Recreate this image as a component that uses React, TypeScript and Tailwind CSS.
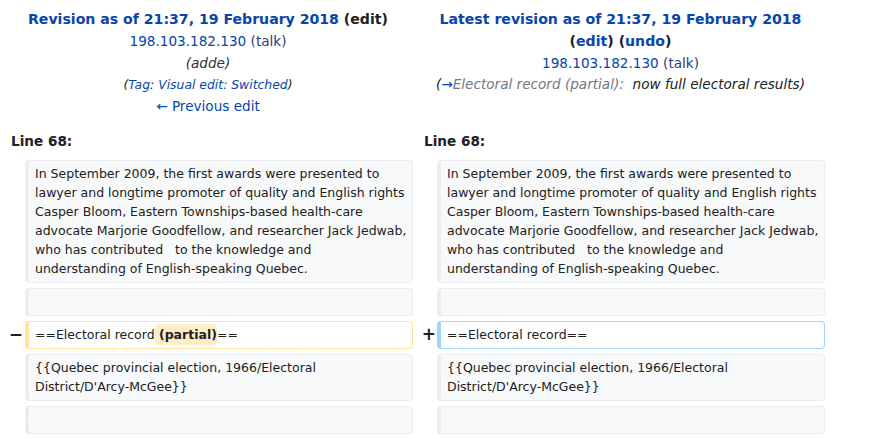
const font = { fontFamily: '"DejaVu Sans", sans-serif' };

function Box({
  kind = "context",
  children,
}: {
  kind?: "context" | "deleted" | "added";
  children?: React.ReactNode;
}) {
  const tone =
    kind === "deleted"
      ? "border-[#ffe49c] bg-white"
      : kind === "added"
        ? "border-[#a3d3ff] bg-white"
        : "border-[#eaecf0] bg-[#f8f9fa]";
  return (
    <div
      className={`min-h-[28px] rounded-[4px] border border-l-4 pl-[6px] pr-[3px] py-[3.5px] text-[12.5px] leading-[19px] whitespace-pre-wrap break-words text-[#202122] ${tone}`}
    >
      {children}
    </div>
  );
}

function Marker({ sign, pad }: { sign?: string; pad: string }) {
  return (
    <div
      className={`flex items-center justify-end text-[17px] font-bold leading-none text-[#202122] ${pad}`}
    >
      {sign}
    </div>
  );
}

// line breaks as the wiki diff wraps them
const para = [
  "In September 2009, the first awards were presented to",
  "lawyer and longtime promoter of quality and English rights",
  "Casper Bloom, Eastern Townships-based health-care",
  "advocate Marjorie Goodfellow, and researcher Jack Jedwab,",
  "who has contributed   to the knowledge and",
  "understanding of English-speaking Quebec.",
].join("\n");
const tmpl = "{{Quebec provincial election, 1966/Electoral\nDistrict/D'Arcy-McGee}}";

export default function App() {
  return (
    <div className="min-h-screen w-[874px] bg-white text-[#202122]" style={font}>
      <div className="grid w-[825px] grid-cols-[416px_409px] pt-[9px] text-center text-[13.6px] leading-[21.76px]">
        <div>
          <div className="text-[14.1px] font-bold">
            <a className="text-[#0645ad]">Revision as of 21:37, 19 February 2018</a>{" "}
            <span className="text-[#202122]">(edit)</span>
          </div>
          <div>
            <a className="text-[#0645ad]">198.103.182.130</a>{" "}
            <span className="text-[#2a3b80]">(talk)</span>
          </div>
          <div className="italic text-[#303236]">(adde)</div>
          <div className="text-[12.4px] italic text-[#202122]">
            (<a className="text-[#0645ad]">Tag</a>:{" "}
            <a className="text-[#0645ad]">Visual edit: Switched</a>)
          </div>
          <div>
            <a className="text-[#0645ad]">← Previous edit</a>
          </div>
        </div>
        <div>
          <div className="text-[14.1px] font-bold">
            <a className="text-[#0645ad]">Latest revision as of 21:37, 19 February 2018</a>
          </div>
          <div className="text-[14.1px] font-bold text-[#202122]">
            (<a className="text-[#0645ad]">edit</a>) (<a className="text-[#0645ad]">undo</a>)
          </div>
          <div>
            <a className="text-[#0645ad]">198.103.182.130</a>{" "}
            <span className="text-[#2a3b80]">(talk)</span>
          </div>
          <div className="italic whitespace-pre text-[#202122]">
            (<a className="text-[#0645ad]">→</a>
            <span className="text-[#72777d]">Electoral record (partial):</span>
            {"  "}now full electoral results)
          </div>
        </div>
      </div>

      <div className="mt-[13px] grid w-[825px] grid-cols-[25px_388px_24px_388px] gap-y-[5px]">
        <div className="col-span-2 pb-[2px] pl-[11px] text-[13.6px] font-bold leading-[21.76px]">Line 68:</div>
        <div className="col-span-2 pb-[2px] pl-[11px] text-[13.6px] font-bold leading-[21.76px]">Line 68:</div>

        <Marker pad="pr-[2px]" />
        <Box>{para}</Box>
        <Marker pad="pr-[2px]" />
        <Box>{para}</Box>

        <Marker pad="pr-[2px]" />
        <Box />
        <Marker pad="pr-[2px]" />
        <Box />

        <Marker sign="−" pad="pr-[2px]" />
        <Box kind="deleted">
          ==Electoral record
          <del className="rounded-[4px] bg-[#feeec8] py-[3px] font-bold no-underline"> (partial)</del>
          ==
        </Box>
        <Marker sign="+" pad="pr-[1px]" />
        <Box kind="added">==Electoral record==</Box>

        <Marker pad="pr-[2px]" />
        <Box>{tmpl}</Box>
        <Marker pad="pr-[2px]" />
        <Box>{tmpl}</Box>

        <Marker pad="pr-[2px]" />
        <Box />
        <Marker pad="pr-[2px]" />
        <Box />
      </div>
    </div>
  );
}
